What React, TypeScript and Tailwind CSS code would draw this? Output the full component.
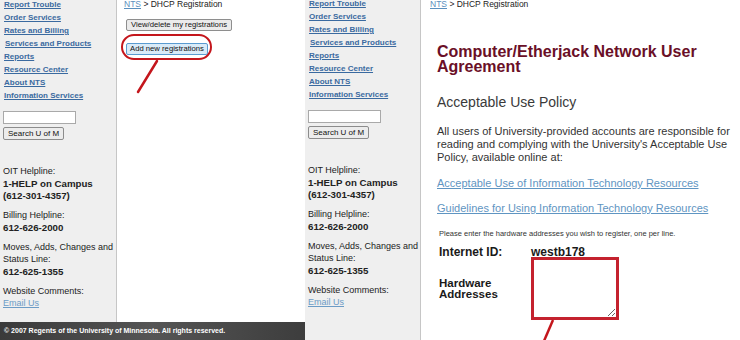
const navLinks = [
  "Report Trouble",
  "Order Services",
  "Rates and Billing",
  "Services and Products",
  "Reports",
  "Resource Center",
  "About NTS",
  "Information Services",
];

function Sidebar({ top, width }: { top: string; width: string }) {
  return (
    <aside className={`${width} h-full shrink-0 border-r border-[#c6c6c6] bg-[#efefef] pl-[3px] text-[#222]`}>
      <ul className={`${top} pl-[1px] text-[8px] font-bold leading-[13px]`}>
        {navLinks.map((l) => (
          <li key={l} className={l === "Services and Products" ? "pl-[1px]" : ""}>
            <a href="#" className="text-[#3a6aa0] underline">
              {l}
            </a>
          </li>
        ))}
      </ul>

      <input
        type="text"
        className="mt-[9px] block h-[13px] w-[73px] border border-[#a9a9a9] bg-white"
      />
      <button className="mt-[3px] block h-[13px] whitespace-nowrap rounded-[2px] border border-[#8c8c8c] bg-[#ececec] px-[4px] text-[8px] leading-[11px] text-[#111]">
        Search U of M
      </button>

      <div className="mt-[25px] text-[9px] leading-[12.5px]">
        <p>OIT Helpline:</p>
        <p className="text-[9.7px] font-bold">1-HELP on Campus</p>
        <p className="text-[9.7px] font-bold">(612-301-4357)</p>
        <p className="mt-[6.5px]">Billing Helpline:</p>
        <p className="text-[9.7px] font-bold">612-626-2000</p>
        <p className="mt-[6.5px]">Moves, Adds, Changes and</p>
        <p>Status Line:</p>
        <p className="text-[9.7px] font-bold">612-625-1355</p>
        <p className="mt-[6.5px]">Website Comments:</p>
        <a href="#" className="text-[#6c9cc6] underline">
          Email Us
        </a>
      </div>
    </aside>
  );
}

function Crumb() {
  return (
    <p className="text-[8.5px] leading-[9px] text-[#222]">
      <a href="#" className="text-[#5b8fbd] underline">
        NTS
      </a>{" "}
      &gt; DHCP Registration
    </p>
  );
}

export default function App() {
  return (
    <div className="relative flex h-[340px] w-[740px] overflow-hidden bg-white font-['Liberation_Sans',Arial,sans-serif]">
      {/* first capture: registration menu */}
      <div className="flex w-[305px] shrink-0 flex-col">
        <div className="flex h-[322px]">
          <Sidebar top="-mt-[2px]" width="w-[117px]" />
          <section className="flex-1 pl-[7px]">
            <Crumb />
            <button className="mt-[10px] ml-[2px] block h-[12px] whitespace-nowrap rounded-[2px] border border-[#8e8e8e] bg-[#ebebeb] px-[4px] text-[7.7px] leading-[10px] text-[#111]">
              View/delete my registrations
            </button>
            <button className="mt-[12px] ml-[2px] block h-[12px] whitespace-nowrap rounded-[2px] border border-[#5a9bd0] bg-[#d9ebf8] px-[3px] text-[7.7px] leading-[10px] text-[#111]">
              Add new registrations
            </button>
          </section>
        </div>
        <footer className="flex h-[18px] items-center bg-linear-to-r from-[#3a3a3a] via-[#555] to-[#3d3d3d] pl-[4px] text-[7px] font-bold text-white">
          © 2007 Regents of the University of Minnesota. All rights reserved.
        </footer>
      </div>

      {/* second capture: user agreement */}
      <div className="flex flex-1">
        <Sidebar top="-mt-[3px]" width="w-[116px]" />
        <main className="flex-1 pl-[9px]">
          <Crumb />
          <div className="pl-[7px]">
            <h1 className="mt-[34.5px] w-[300px] text-[16px] font-bold leading-[15px] text-[#6a0f27]">
              Computer/Etherjack Network User Agreement
            </h1>
            <h2 className="mt-[20.5px] text-[14px] leading-[16px] text-[#3a3a3a]">
              Acceptable Use Policy
            </h2>
            <p className="mt-[14.5px] text-[11px] leading-[13px] text-[#333]">
              All users of University-provided accounts are responsible for
              <br />
              reading and complying with the University's Acceptable Use
              <br />
              Policy, available online at:
            </p>
            <a href="#" className="mt-[13px] block text-[11px] leading-[13px] text-[#5f95c2] underline">
              Acceptable Use of Information Technology Resources
            </a>
            <a href="#" className="mt-[12px] block text-[11px] leading-[13px] text-[#5f95c2] underline">
              Guidelines for Using Information Technology Resources
            </a>
            <p className="mt-[14px] ml-[2px] text-[7.5px] leading-[9px] text-[#333]">
              Please enter the hardware addresses you wish to register, one per line.
            </p>
            <div className="ml-[2px] grid grid-cols-[92px_auto] text-[#1a1a1a]">
              <span className="mt-[7.5px] text-[12px] font-bold leading-[14px]">Internet ID:</span>
              <span className="mt-[7.5px] text-[12px] font-bold leading-[14px]">westb178</span>
              <span className="-mt-[2px] self-center text-[11.5px] font-bold leading-[11px]">
                Hardware
                <br />
                Addresses
              </span>
              <textarea className="-mt-[2px] h-[63px] w-[88px] border-[3px] border-[#c4222e] bg-white" />
            </div>
          </div>
        </main>
      </div>

      {/* red annotations drawn over the captures */}
      <div className="pointer-events-none absolute left-[121px] top-[34px] h-[26px] w-[91px] rounded-full border-2 border-[#c4161c]" />
      <svg className="pointer-events-none absolute left-0 top-0" width="740" height="340">
        <line x1="157" y1="61" x2="138" y2="92" stroke="#c4161c" strokeWidth="2.5" strokeLinecap="round" />
        <line x1="553" y1="320" x2="544" y2="341" stroke="#c4161c" strokeWidth="2.5" />
      </svg>
    </div>
  );
}
